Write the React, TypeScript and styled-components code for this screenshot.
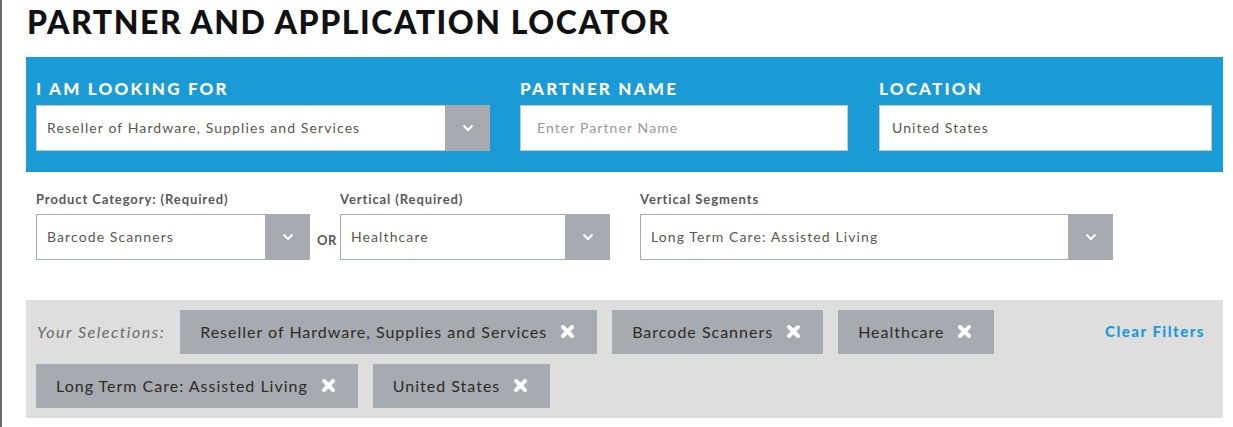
import React from "react";
import styled, { createGlobalStyle } from "styled-components";

const Global = createGlobalStyle`
  html, body { margin: 0; padding: 0; background: #fff; }
  body { font-family: Lato, "Open Sans", sans-serif; }
  * { box-sizing: border-box; }
`;

const Page = styled.div`
  width: 1233px;
  min-height: 427px;
  border-left: 2px solid #6a6a6a;
  padding: 0 10px 0 24px;
`;

const Title = styled.h1`
  margin: 0;
  padding-top: 4px;
  height: 57px;
  font-family: Lato, sans-serif;
  font-weight: 900;
  font-size: 32px;
  line-height: 36px;
  letter-spacing: 1.55px;
  color: #111;
  padding-left: 1px;
`;

const BluePanel = styled.section`
  background: #1a9bd6;
  padding: 22px 11px 21px 10px;
  display: flex;
  gap: 30px;
`;

const Field = styled.div<{ $w: number; $offset?: number }>`
  width: ${(p) => p.$w}px;
  margin-left: ${(p) => p.$offset ?? 0}px;
  display: flex;
  flex-direction: column;
`;

const BigLabel = styled.label`
  font-family: Lato, sans-serif;
  font-weight: 900;
  font-size: 17px;
  line-height: 20px;
  letter-spacing: 2.2px;
  color: #fff;
  margin-bottom: 6px;
`;

const SmallLabel = styled.label`
  font-family: Lato, sans-serif;
  font-weight: 700;
  font-size: 13px;
  line-height: 16px;
  letter-spacing: 0.9px;
  color: #58585a;
  margin-bottom: 7px;
`;

const SelectBox = styled.div<{ $light?: boolean }>`
  height: 46px;
  display: flex;
  background: #fff;
  border: 1px solid ${(p) => (p.$light ? "#c9c9c9" : "#a5abb0")};
`;

const SelectValue = styled.div`
  flex: 1;
  display: flex;
  align-items: center;
  padding: 0 0 2px 10px;
  font-family: Lato, sans-serif;
  font-size: 14px;
  letter-spacing: 1.1px;
  color: #5b5752;
  white-space: nowrap;
  overflow: hidden;
`;

const SelectButton = styled.div`
  width: 45px;
  margin: -1px -1px -1px 0;
  background: #a5abb0;
  display: flex;
  align-items: center;
  justify-content: center;
`;

const TextInput = styled.div<{ $placeholder?: boolean; $pad: number }>`
  height: 46px;
  background: #fff;
  border: 1px solid #c9c9c9;
  display: flex;
  align-items: center;
  padding: 0 0 2px ${(p) => p.$pad}px;
  font-family: Lato, sans-serif;
  font-size: 14px;
  letter-spacing: 1.1px;
  color: ${(p) => (p.$placeholder ? "#9a9a9a" : "#5b5752")};
`;

const FilterRow = styled.div`
  display: flex;
  align-items: flex-start;
  padding: 19px 0 0 10px;
  height: 128px;
`;

const OrText = styled.div`
  width: 30px;
  height: 46px;
  margin-top: 23px;
  display: flex;
  align-items: flex-end;
  padding: 0 0 12px 7px;
  font-family: Lato, sans-serif;
  font-weight: 700;
  font-size: 13px;
  letter-spacing: 0.6px;
  color: #58585a;
`;

const Spacer = styled.div`
  width: 30px;
`;

const Selections = styled.section`
  background: #dedede;
  padding: 10px 18px 10px 10px;
  display: flex;
  align-items: flex-start;
`;

const ChipArea = styled.div`
  flex: 1;
  display: flex;
  flex-wrap: wrap;
  gap: 10px 15px;
  align-items: center;
`;

const SelLabel = styled.span`
  font-family: Lato, sans-serif;
  font-style: italic;
  font-size: 16px;
  letter-spacing: 1.5px;
  color: #6a6a6a;
  padding: 0 0 2px 1px;
`;

const Chip = styled.div`
  height: 44px;
  display: flex;
  align-items: center;
  gap: 13px;
  padding: 0 22px 2px 20px;
  background: #a5abb0;
  font-family: Lato, sans-serif;
  font-size: 16px;
  letter-spacing: 1px;
  color: #2e2a26;
`;

const ClearLink = styled.a`
  height: 44px;
  display: flex;
  align-items: center;
  padding-bottom: 2px;
  font-family: Lato, sans-serif;
  font-weight: 900;
  font-size: 15px;
  letter-spacing: 1.5px;
  color: #1a9bd6;
  text-decoration: none;
`;

const Chevron = () => (
  <svg width="12" height="8" viewBox="0 0 12 8">
    <path d="M1.5 1.5 L6 6 L10.5 1.5" fill="none" stroke="#fff" strokeWidth="2" />
  </svg>
);

const XIcon = () => (
  <svg width="15" height="15" viewBox="0 0 15 15">
    <path d="M3 3 L12 12 M12 3 L3 12" fill="none" stroke="#fff" strokeWidth="4" strokeLinecap="round" />
  </svg>
);

const Select = ({ value, light }: { value: string; light?: boolean }) => (
  <SelectBox $light={light}>
    <SelectValue>{value}</SelectValue>
    <SelectButton>
      <Chevron />
    </SelectButton>
  </SelectBox>
);

const chips = [
  "Reseller of Hardware, Supplies and Services",
  "Barcode Scanners",
  "Healthcare",
  "Long Term Care: Assisted Living",
  "United States",
];

export default function App() {
  return (
    <Page>
      <Global />
      <Title>PARTNER AND APPLICATION LOCATOR</Title>
      <BluePanel>
        <Field $w={454}>
          <BigLabel>I AM LOOKING FOR</BigLabel>
          <Select value="Reseller of Hardware, Supplies and Services" light />
        </Field>
        <Field $w={328}>
          <BigLabel>PARTNER NAME</BigLabel>
          <TextInput $placeholder $pad={16}>Enter Partner Name</TextInput>
        </Field>
        <Field $w={333} $offset={1}>
          <BigLabel>LOCATION</BigLabel>
          <TextInput $pad={12}>United States</TextInput>
        </Field>
      </BluePanel>
      <FilterRow>
        <Field $w={274}>
          <SmallLabel>Product Category: (Required)</SmallLabel>
          <Select value="Barcode Scanners" />
        </Field>
        <OrText>OR</OrText>
        <Field $w={270}>
          <SmallLabel>Vertical (Required)</SmallLabel>
          <Select value="Healthcare" />
        </Field>
        <Spacer />
        <Field $w={473}>
          <SmallLabel>Vertical Segments</SmallLabel>
          <Select value="Long Term Care: Assisted Living" />
        </Field>
      </FilterRow>
      <Selections>
        <ChipArea>
          <SelLabel>Your Selections:</SelLabel>
          {chips.map((c) => (
            <Chip key={c}>
              {c}
              <XIcon />
            </Chip>
          ))}
        </ChipArea>
        <ClearLink href="#">Clear Filters</ClearLink>
      </Selections>
    </Page>
  );
}
